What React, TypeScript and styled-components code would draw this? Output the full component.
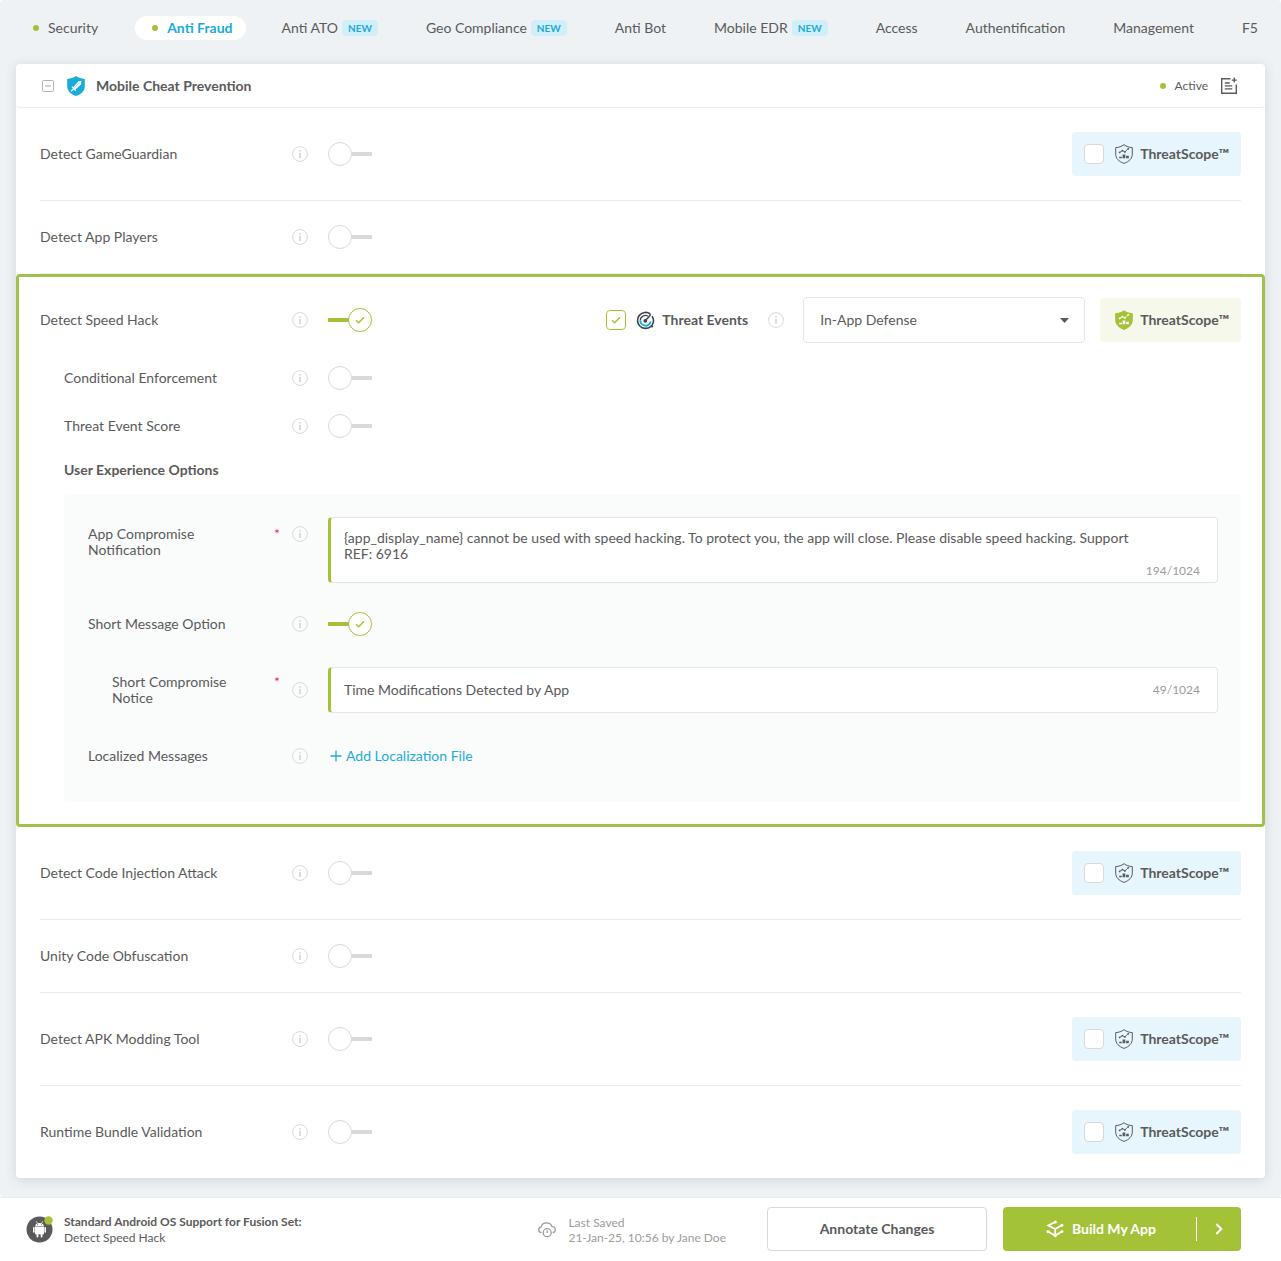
import React, { useId, useState } from "react";
import styled, { createGlobalStyle, css } from "styled-components";

const color = {
  text: "#5a5a5a",
  muted: "#9c9c9c",
  line: "#ebebeb",
  control: "#d9d9d9",
  green: "#a4c237",
  outline: "#a0c14b",
  blue: "#1aabdb",
  page: "#eef2f5",
};

const GlobalStyle = createGlobalStyle`
  *, *::before, *::after { box-sizing: border-box; }
  body { margin: 0; background: #fff; }
  body, button, input, textarea, select {
    font-family: Lato, "Liberation Sans", sans-serif;
    font-size: 14px;
    line-height: 16px;
    color: ${color.text};
  }
`;

/* ---------- shell ---------- */

const Shell = styled.div`
  min-height: 100vh;
  display: flex;
  flex-direction: column;
  overflow: hidden;
`;

const Main = styled.main`
  flex: 1;
  padding: 0 16px 19px;
  background: ${color.page};
  border-radius: 4px;
`;

const Tabs = styled.nav`
  display: flex;
  gap: 24px;
  padding: 16px 0 24px;
  margin-right: -16px;
  overflow: hidden;
`;

const Tab = styled.a<{ $active?: boolean; $dotted?: boolean }>`
  flex: none;
  display: flex;
  align-items: center;
  height: 24px;
  padding: 0 ${(p) => (p.$dotted ? 13 : 12)}px 0 12px;
  border-radius: 12px;
  color: ${color.text};
  text-decoration: none;
  white-space: nowrap;
  ${(p) =>
    p.$active &&
    css`
      background: #fff;
      color: ${color.blue};
      font-weight: 700;
    `}
`;

const Dot = styled.span`
  flex: none;
  width: 6px;
  height: 6px;
  border-radius: 50%;
  background: ${color.green};
`;

const TabDot = styled(Dot)`
  margin: 0 9px 0 5px;
`;

const NewBadge = styled.span`
  margin-left: 4px;
  padding: 0 6px;
  border-radius: 4px;
  background: #d2eff9;
  color: ${color.blue};
  font-size: 10px;
  font-weight: 700;
`;

/* ---------- card ---------- */

const Card = styled.section`
  background: #fff;
  border-radius: 4px;
  box-shadow: 0 2px 12px rgba(60, 70, 80, 0.16);
`;

const CardHeader = styled.header`
  display: flex;
  align-items: center;
  height: 44px;
  padding: 0 27px 0 26px;
  border-bottom: 1px solid #e8edf1;
  border-radius: 4px;
`;

const IconButton = styled.button`
  display: flex;
  padding: 0;
  border: 0;
  background: none;
  cursor: pointer;
`;

const CardTitle = styled.h2`
  margin: 0 auto 0 10px;
  font-size: 14px;
  font-weight: 700;
`;

const ShieldSlot = styled.span`
  display: flex;
  margin-left: 12px;
`;

const Status = styled.span`
  display: flex;
  align-items: center;
  gap: 9px;
  margin-right: 12px;
  font-size: 12px;
`;

const Row = styled.div<{ $last?: boolean }>`
  display: flex;
  align-items: center;
  margin: 0 24px;
  padding: 24px 0;
  border-bottom: ${(p) => (p.$last ? "0" : `1px solid ${color.line}`)};
`;

const Expanded = styled.div`
  padding: 20px 21px 22px;
  border: 3px solid ${color.outline};
  border-radius: 4px;
`;

const ExpandedHead = styled.div`
  display: flex;
  align-items: center;
  margin-bottom: 11px;
`;

const SubRow = styled.div`
  display: flex;
  align-items: center;
  height: 48px;
  padding-left: 24px;
`;

const SubHeading = styled.h3`
  margin: 0 0 4px 24px;
  font-size: 14px;
  font-weight: 700;
  line-height: 40px;
`;

const Panel = styled.div`
  margin-left: 24px;
  padding: 23px 23px 22px 24px;
  background: #fafcfb;
  border-radius: 4px;
`;

const PanelRow = styled.div<{ $kind?: "top" | "tall" }>`
  display: flex;
  align-items: ${(p) => (p.$kind === "top" ? "flex-start" : "center")};
  min-height: ${(p) => (p.$kind === "tall" ? 84 : 48)}px;
  padding-bottom: ${(p) => (p.$kind === "top" ? 17 : 0)}px;
`;

/* Label, required mark and info icon share one column across all indents. */
const labelWidth = { 0: 252, 1: 228, 2: 204, 3: 180 } as const;
type Level = keyof typeof labelWidth;

const LabelCell = styled.div<{ $level: Level; $top?: boolean }>`
  flex: none;
  display: flex;
  align-items: center;
  width: ${(p) => labelWidth[p.$level] + 16}px;
  margin-left: ${(p) => (p.$level === 3 ? 24 : 0)}px;
  margin-right: 20px;
  ${(p) =>
    p.$top &&
    css`
      align-items: flex-start;
      padding-top: 9px;
    `}
`;

const LabelText = styled.label<{ $narrow?: boolean }>`
  flex: 1;
  ${(p) => p.$narrow && "max-width: 130px;"}
`;

const Required = styled.span`
  align-self: flex-start;
  margin: 0 12px 0 auto;
  color: #ee2a60;
`;

/* ---------- controls ---------- */

const Switch = styled.input`
  appearance: none;
  display: flex;
  align-items: center;
  width: 44px;
  height: 24px;
  margin: 0;
  cursor: pointer;
  background: linear-gradient(${color.control}, ${color.control}) right center / 22px 4px no-repeat;
  border-radius: 2px;

  &::before {
    content: "";
    width: 24px;
    height: 24px;
    border: 1px solid ${color.control};
    border-radius: 50%;
    background: #fff;
  }

  &:checked {
    background: linear-gradient(${color.green}, ${color.green}) left center / 22px 4px no-repeat;
  }

  &:checked::before {
    margin-left: 20px;
    border-color: ${color.green};
    background: #fff
      url("data:image/svg+xml,%3Csvg xmlns='http://www.w3.org/2000/svg' width='10' height='8' fill='none' stroke='%23a4c237' stroke-width='1.3'%3E%3Cpath d='M1 4.2 3.7 6.8 9 1.2'/%3E%3C/svg%3E")
      center / 10px 8px no-repeat;
  }
`;

const Tick = styled.input`
  appearance: none;
  flex: none;
  width: 20px;
  height: 20px;
  margin: 0;
  border: 1px solid ${color.control};
  border-radius: 4px;
  background: #fff;
  cursor: pointer;

  &:checked {
    border-color: ${color.green};
    background: #fff
      url("data:image/svg+xml,%3Csvg xmlns='http://www.w3.org/2000/svg' width='10' height='8' fill='none' stroke='%23a4c237' stroke-width='1.3'%3E%3Cpath d='M1 4.2 3.7 6.8 9 1.2'/%3E%3C/svg%3E")
      center / 10px 8px no-repeat;
  }
`;

const Scope = styled.label<{ $on?: boolean }>`
  flex: none;
  display: flex;
  align-items: center;
  height: 44px;
  margin-left: auto;
  padding: 0 12px;
  border-radius: 4px;
  background: #e7f6fc;
  font-weight: 700;
  white-space: nowrap;

  svg {
    margin: 0 6px 0 10px;
  }

  ${(p) =>
    p.$on &&
    css`
      margin-left: 15px;
      background: #f6f8eb;
      svg {
        margin-left: 2px;
      }
    `}
`;

const EventsGroup = styled.div`
  display: flex;
  align-items: center;
  margin-left: auto;
`;

const EventsLabel = styled.label`
  display: flex;
  align-items: center;
  margin-right: 20px;
  font-weight: 700;
  white-space: nowrap;

  svg {
    margin: 0 7px 0 10px;
  }
`;

const SelectBox = styled.div`
  display: grid;
  align-items: center;
  width: 282px;
  margin-left: 19px;

  > * {
    grid-area: 1 / 1;
  }

  svg {
    justify-self: end;
    margin-right: 16px;
    pointer-events: none;
  }
`;

const Select = styled.select`
  appearance: none;
  width: 100%;
  height: 46px;
  padding: 0 16px;
  border: 1px solid #e6e6e6;
  border-radius: 4px;
  background: #fff;
`;

const Field = styled.div`
  flex: 1;
  display: flex;
  align-items: center;
  border: 1px solid #e6e6e6;
  border-left: 3px solid ${color.green};
  border-radius: 4px;
  background: #fff;
`;

const fieldInput = css`
  flex: 1;
  min-width: 0;
  border: 0;
  outline: 0;
  background: none;
`;

const TextInput = styled.input`
  ${fieldInput}
  height: 44px;
  padding: 0 13px 2px;
`;

const TextArea = styled.textarea`
  ${fieldInput}
  height: 64px;
  padding: 12px 0 12px 13px;
  resize: none;
  overflow: hidden;
`;

const Counter = styled.span<{ $bottom?: boolean }>`
  margin: 0 17px 0 8px;
  color: ${color.muted};
  font-size: 12px;
  ${(p) =>
    p.$bottom &&
    css`
      align-self: flex-end;
      margin-bottom: 3px;
    `}
`;

const AddLink = styled.button`
  display: flex;
  align-items: center;
  gap: 4px;
  padding: 0 2px;
  border: 0;
  background: none;
  color: ${color.blue};
  cursor: pointer;
`;

/* ---------- footer ---------- */

const Footer = styled.footer`
  display: flex;
  align-items: center;
  height: 64px;
  padding: 0 40px 2px 26px;
  border-top: 1px solid #e8edf1;
  background: #fff;
`;

const FooterText = styled.div`
  margin-left: 10px;
  padding-top: 2px;
  font-size: 12px;

  strong {
    display: block;
  }
`;

const Saved = styled.div`
  display: flex;
  align-items: center;
  gap: 12px;
  margin: 0 41px 0 auto;
  padding-top: 2px;
  color: ${color.muted};
  font-size: 12px;
  line-height: 15px;
`;

const Annotate = styled.button`
  width: 220px;
  height: 44px;
  border: 1px solid ${color.control};
  border-radius: 4px;
  background: #fff;
  font-weight: 700;
  cursor: pointer;
`;

const BuildGroup = styled.div`
  display: flex;
  align-items: center;
  width: 238px;
  height: 44px;
  margin-left: 16px;
  border-radius: 4px;
  background: ${color.green};
`;

const Build = styled.button`
  flex: 1;
  display: flex;
  align-items: center;
  justify-content: flex-end;
  gap: 8px;
  height: 24px;
  padding: 0 40px 0 0;
  border: 0;
  border-right: 1px solid #fff;
  background: none;
  color: #fff;
  font-weight: 700;
  cursor: pointer;
`;

const BuildMore = styled(IconButton)`
  width: 44px;
  height: 44px;
  align-items: center;
  justify-content: center;
`;

/* ---------- drawings ---------- */

const InfoIcon = () => (
  <svg width="16" height="16" viewBox="0 0 16 16" fill="none" aria-hidden>
    <circle cx="8" cy="8" r="7.4" stroke={color.control} />
    <path d="M8 4.2v1.6M8 7v5" stroke={color.control} strokeWidth="1.8" />
  </svg>
);

const CollapseIcon = () => (
  <svg width="12" height="12" viewBox="0 0 12 12" fill="none" stroke="#b5b5b5" aria-hidden>
    <rect x=".5" y=".5" width="11" height="11" rx="1" />
    <path d="M3 6h6" strokeWidth="1.2" />
  </svg>
);

const SwordShield = () => (
  <svg width="20" height="20" viewBox="0 0 20 20" aria-hidden>
    <path
      d="M10 0c2.6 1.8 5.4 2.7 8.8 2.9v7c0 4.9-3.3 8.2-8.8 10.1C4.5 18.1 1.2 14.8 1.2 9.9v-7C4.6 2.7 7.4 1.8 10 0Z"
      fill={color.blue}
    />
    <path d="m15.4 4.8-.4 3.5-5.5 5.2-2.300-2.300 5.100-5.600Z" fill="#fff" />
    <path d="m6 10.800 3.800 3.800M7.600 12.600l-2.500 2.600" stroke="#fff" strokeWidth="1.300" />
    <path d="m8.900 11.500 4.900-5" stroke={color.blue} strokeWidth=".6" />
  </svg>
);

const NoteIcon = () => (
  <svg width="18" height="18" viewBox="0 0 18 18" fill="none" stroke={color.text} strokeWidth="1.400" aria-hidden>
    <path d="M10.500 1.700H1.700v14.600h14.600V7.500" />
    <path d="M4.800 6h5M4.800 8.900h7.400M4.800 11.800h7.400M14.300.600v5M11.800 3.100h5" strokeWidth="1.300" />
  </svg>
);

const shieldPath =
  "M10 .700c2.500 1.900 5.200 2.700 8.300 2.900v6.300c0 4.600-3.100 7.600-8.300 9.500C4.800 17.500 1.700 14.500 1.700 9.900V3.600C4.800 3.400 7.500 2.600 10 .700Z";

const ScopeIcon = ({ on }: { on?: boolean }) => {
  const ink = on ? "#fff" : color.text;
  return (
    <svg width="20" height="20" viewBox="0 0 20 20" fill="none" aria-hidden>
      <path d={shieldPath} fill={on ? color.green : "none"} stroke={on ? color.green : color.text} />
      <path d="m5.600 8.400 2.800-1.700 2.500 1.200 3.500-3.400" stroke={ink} strokeWidth=".9" />
      <g fill={ink}>
        <circle cx="5.600" cy="8.400" r=".9" />
        <circle cx="8.400" cy="6.700" r=".9" />
        <circle cx="10.900" cy="7.900" r=".9" />
        <circle cx="14.300" cy="4.800" r=".9" />
        <path d="M5.200 12.800h2.600v1.400H5.200zM8.600 10.600h2.700v3.600H8.600zM12.100 11.800h2.700v2.400h-2.700z" />
      </g>
    </svg>
  );
};

const RadarIcon = () => (
  <svg width="19" height="19" viewBox="0 0 19 19" fill="none" aria-hidden>
    <path d="M14.300 3A8 8 0 1 0 14.600 15.600" stroke="#3c4650" strokeWidth="1.600" />
    <path d="M16.100 5.200A8 8 0 0 1 16.200 13.800" stroke="#3c4650" strokeWidth="1.600" />
    <circle cx="15.700" cy="15.200" r="1.400" fill="#3c4650" />
    <path d="M12 5A5.200 5.200 0 0 0 4.300 9.500" stroke="#3c4650" strokeWidth="1.300" />
    <path d="M4.300 9.500a5.200 5.200 0 0 0 10.300 1" stroke={color.blue} strokeWidth="1.900" />
    <circle cx="9.300" cy="9.800" r="1.900" fill="#3c4650" />
    <path d="m9.300 9.800 5.500-6.200" stroke="#3c4650" strokeWidth="1.500" />
  </svg>
);

const Caret = () => (
  <svg width="9" height="5" viewBox="0 0 9 5" aria-hidden>
    <path d="M0 0h9L4.500 5Z" fill={color.text} />
  </svg>
);

const PlusIcon = () => (
  <svg width="12" height="12" viewBox="0 0 12 12" stroke={color.blue} strokeWidth="1.300" aria-hidden>
    <path d="M6 .500v11M.500 6h11" />
  </svg>
);

const AndroidIcon = () => (
  <svg width="28" height="28" viewBox="0 0 28 28" aria-hidden>
    <circle cx="13.500" cy="14.500" r="13" fill={color.text} />
    <g fill="#fff">
      <path d="M9 11.400a4.600 4.200 0 0 1 9 0Z" />
      <path d="M9 12h9v7.300H9z" />
      <rect x="7" y="12" width="1.600" height="5.800" rx=".8" />
      <rect x="18.400" y="12" width="1.600" height="5.800" rx=".8" />
      <rect x="10.500" y="18" width="1.900" height="4.400" rx=".9" />
      <rect x="14.600" y="18" width="1.900" height="4.400" rx=".9" />
    </g>
    <path d="m10.300 6.300 1.200 2M16.700 6.300l-1.200 2" stroke="#fff" strokeWidth=".7" />
    <circle cx="11.500" cy="9.800" r=".5" fill={color.text} />
    <circle cx="15.500" cy="9.800" r=".5" fill={color.text} />
    <circle cx="22.500" cy="5.500" r="4.200" fill={color.green} />
  </svg>
);

const CloudIcon = () => (
  <svg width="18" height="16" viewBox="0 0 18 16" fill="none" stroke={color.muted} strokeWidth="1.300" aria-hidden>
    <path d="M3.400 10.600C1.700 10.400.700 9.100.700 7.700c0-1.500 1-2.700 2.600-2.900C3.800 2.400 6 .900 8.700.900c2.500 0 4.600 1.400 5.200 3.500 2 .2 3.400 1.500 3.400 3.300 0 1.500-1 2.700-2.600 2.900" />
    <circle cx="9.200" cy="10.700" r="4" />
    <path d="M9.200 8.600v2.500" />
  </svg>
);

const BuildIcon = () => (
  <svg width="18" height="18" viewBox="0 0 18 18" fill="none" stroke="#fff" strokeWidth="1.800" aria-hidden>
    <path d="M9.200 2 2.300 5.500 9.200 9l6.700-3.700M2 11.600l7.200 3.900 6.700-3.900M9.200 9v6.500" />
    <g fill="#fff" stroke="none">
      <circle cx="9.400" cy="2" r="1.500" />
      <circle cx="15.900" cy="5.200" r="1.500" />
      <circle cx="2" cy="11.600" r="1.500" />
      <circle cx="15.900" cy="11.600" r="1.500" />
      <circle cx="9.200" cy="15.700" r="1.600" />
    </g>
  </svg>
);

const Chevron = () => (
  <svg width="8" height="12" viewBox="0 0 8 12" fill="none" stroke="#fff" strokeWidth="2" aria-hidden>
    <path d="m1.300 1 5 5-5 5" />
  </svg>
);

/* ---------- parts ---------- */

interface LabelProps {
  id: string;
  text: string;
  level: Level;
  required?: boolean;
  top?: boolean;
}

const SettingLabel = ({ id, text, level, required, top }: LabelProps) => (
  <LabelCell $level={level} $top={top}>
    <LabelText htmlFor={id} $narrow={required}>
      {text}
    </LabelText>
    {required && <Required>*</Required>}
    <IconButton type="button" aria-label={`About ${text}`}>
      <InfoIcon />
    </IconButton>
  </LabelCell>
);

interface ToggleSettingProps {
  text: string;
  level: Level;
  on?: boolean;
}

const ToggleSetting = ({ text, level, on = false }: ToggleSettingProps) => {
  const id = useId();
  const [checked, setChecked] = useState(on);
  return (
    <>
      <SettingLabel id={id} text={text} level={level} />
      <Switch type="checkbox" role="switch" id={id} checked={checked} onChange={() => setChecked(!checked)} />
    </>
  );
};

const ScopeOption = () => (
  <Scope>
    <Tick type="checkbox" />
    <ScopeIcon />
    ThreatScope™
  </Scope>
);

interface Feature {
  name: string;
  scope?: boolean;
}

const FeatureRow = ({ feature, last }: { feature: Feature; last?: boolean }) => (
  <Row $last={last}>
    <ToggleSetting text={feature.name} level={0} />
    {feature.scope && <ScopeOption />}
  </Row>
);

const tabs = [
  { name: "Security", dot: true },
  { name: "Anti Fraud", dot: true, active: true },
  { name: "Anti ATO", fresh: true },
  { name: "Geo Compliance", fresh: true },
  { name: "Anti Bot" },
  { name: "Mobile EDR", fresh: true },
  { name: "Access" },
  { name: "Authentification" },
  { name: "Management" },
  { name: "F5" },
];

const before: Feature[] = [{ name: "Detect GameGuardian", scope: true }, { name: "Detect App Players" }];

const after: Feature[] = [
  { name: "Detect Code Injection Attack", scope: true },
  { name: "Unity Code Obfuscation" },
  { name: "Detect APK Modding Tool", scope: true },
  { name: "Runtime Bundle Validation", scope: true },
];

const SpeedHack = () => (
  <Expanded>
    <ExpandedHead>
      <ToggleSetting text="Detect Speed Hack" level={0} on />
      <EventsGroup>
        <EventsLabel>
          <Tick type="checkbox" defaultChecked />
          <RadarIcon />
          Threat Events
        </EventsLabel>
        <IconButton type="button" aria-label="About Threat Events">
          <InfoIcon />
        </IconButton>
        <SelectBox>
          <Select aria-label="Threat Events mode" defaultValue="In-App Defense">
            <option>In-App Defense</option>
          </Select>
          <Caret />
        </SelectBox>
        <Scope as="div" $on>
          <ScopeIcon on />
          ThreatScope™
        </Scope>
      </EventsGroup>
    </ExpandedHead>
    <SubRow>
      <ToggleSetting text="Conditional Enforcement" level={1} />
    </SubRow>
    <SubRow>
      <ToggleSetting text="Threat Event Score" level={1} />
    </SubRow>
    <SubHeading>User Experience Options</SubHeading>
    <Panel>
      <PanelRow $kind="top">
        <SettingLabel id="notification" text="App Compromise Notification" level={2} required top />
        <Field>
          <TextArea
            id="notification"
            defaultValue="{app_display_name} cannot be used with speed hacking. To protect you, the app will close. Please disable speed hacking. Support REF: 6916"
          />
          <Counter $bottom>194/1024</Counter>
        </Field>
      </PanelRow>
      <PanelRow>
        <ToggleSetting text="Short Message Option" level={2} on />
      </PanelRow>
      <PanelRow $kind="tall">
        <SettingLabel id="notice" text="Short Compromise Notice" level={3} required />
        <Field>
          <TextInput id="notice" type="text" defaultValue="Time Modifications Detected by App" />
          <Counter>49/1024</Counter>
        </Field>
      </PanelRow>
      <PanelRow>
        <SettingLabel id="localization" text="Localized Messages" level={2} />
        <AddLink id="localization" type="button">
          <PlusIcon />
          Add Localization File
        </AddLink>
      </PanelRow>
    </Panel>
  </Expanded>
);

export default function App() {
  return (
    <Shell>
      <GlobalStyle />
      <Main>
        <Tabs>
          {tabs.map((tab) => (
            <Tab key={tab.name} href="#" $active={tab.active} $dotted={tab.dot}>
              {tab.dot && <TabDot />}
              {tab.name}
              {tab.fresh && <NewBadge>NEW</NewBadge>}
            </Tab>
          ))}
        </Tabs>
        <Card>
          <CardHeader>
            <IconButton type="button" aria-label="Collapse">
              <CollapseIcon />
            </IconButton>
            <ShieldSlot>
              <SwordShield />
            </ShieldSlot>
            <CardTitle>Mobile Cheat Prevention</CardTitle>
            <Status>
              <Dot />
              Active
            </Status>
            <IconButton type="button" aria-label="Add note">
              <NoteIcon />
            </IconButton>
          </CardHeader>
          {before.map((feature) => (
            <FeatureRow key={feature.name} feature={feature} />
          ))}
          <SpeedHack />
          {after.map((feature, index) => (
            <FeatureRow key={feature.name} feature={feature} last={index === after.length - 1} />
          ))}
        </Card>
      </Main>
      <Footer>
        <AndroidIcon />
        <FooterText>
          <strong>Standard Android OS Support for Fusion Set:</strong>
          Detect Speed Hack
        </FooterText>
        <Saved>
          <CloudIcon />
          <div>
            Last Saved
            <br />
            21-Jan-25, 10:56 by Jane Doe
          </div>
        </Saved>
        <Annotate type="button">Annotate Changes</Annotate>
        <BuildGroup>
          <Build type="button">
            <BuildIcon />
            Build My App
          </Build>
          <BuildMore type="button" aria-label="More build options">
            <Chevron />
          </BuildMore>
        </BuildGroup>
      </Footer>
    </Shell>
  );
}
